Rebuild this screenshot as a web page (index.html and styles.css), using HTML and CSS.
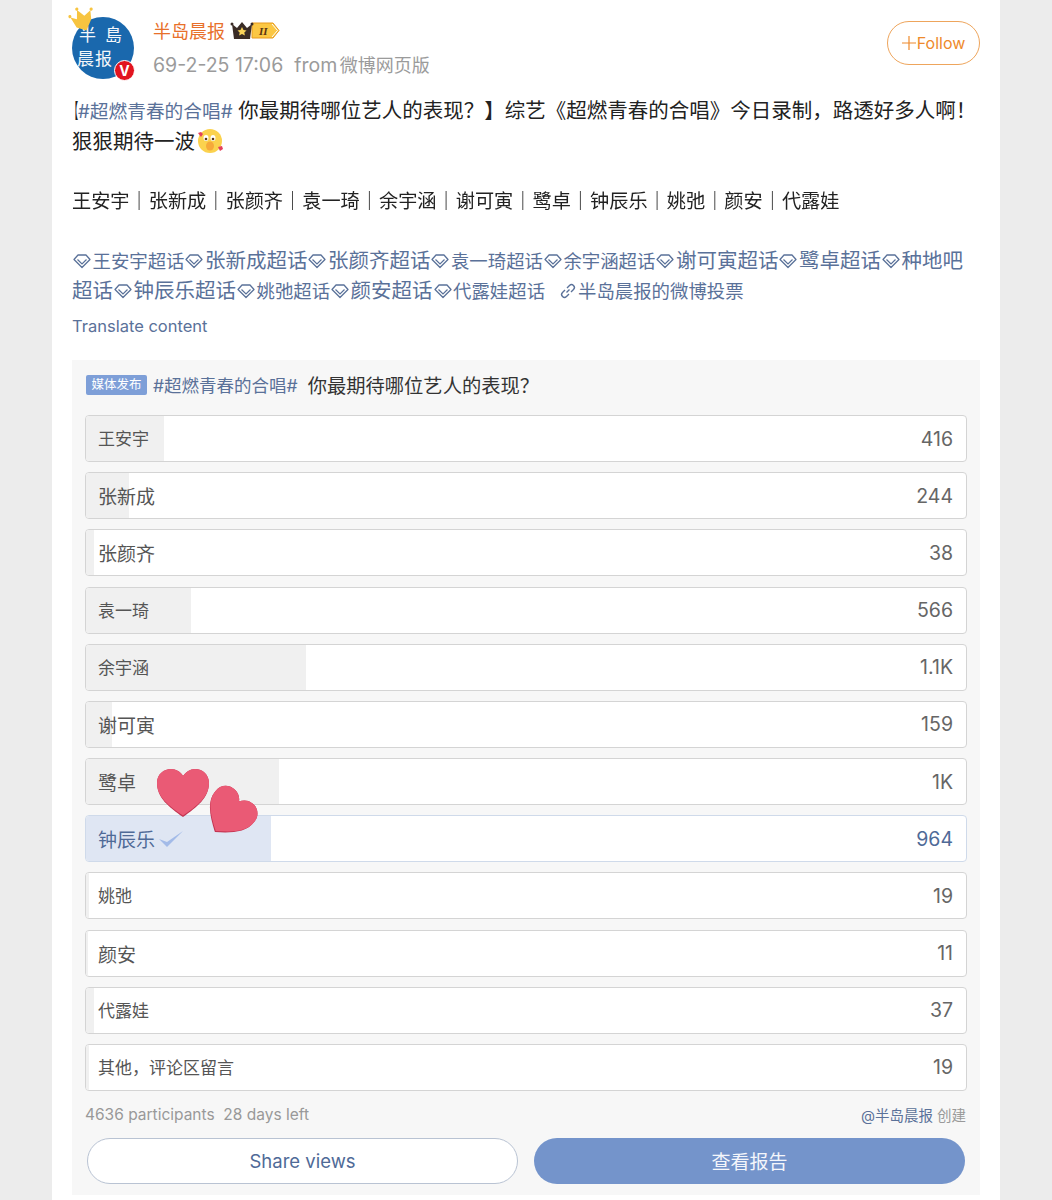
FILE: index.html
```html
<!DOCTYPE html>
<html lang="en">
<head>
    <meta charset="UTF-8">
    <meta name="viewport" content="width=device-width, initial-scale=1.0">
    <title>半岛晨报</title>
    <link rel="stylesheet" href="styles.css">
</head>
<body>
    <svg class="defs" width="0" height="0">
        <symbol id="gem" viewBox="0 0 18 16">
            <path d="M5 2h8l4 4.500L9 14.500 1 6.500z" fill="none" stroke="#5a7199" stroke-width="1.300" stroke-linejoin="round"/>
            <path d="M4.500 6.500L9 11l4.500-4.500" fill="none" stroke="#5a7199" stroke-width="1.200"/>
        </symbol>
        <symbol id="heart-shape" viewBox="0 0 52 48">
            <path d="M26 48C12 38 0 29 0 14 0 5 7 0 14 0c5 0 10 3 12 7 3-4 7-7 12-7 8 0 14 6 14 14 0 15-12 24-26 34z" fill="#c23350"/>
            <path d="M26 46.500C12 37 0 28 0 14 0 5 7 0 14 0c5 0 10 3 12 7 3-4 7-7 12-7 8 0 14 6 14 14 0 14-12 23-26 32.500z" fill="#ea5a75"/>
        </symbol>
    </svg>

    <main class="page">
        <header class="post-head">
            <div class="avatar">
                <div class="avatar-disc">
                    <div class="avatar-row top"><span>半</span><span>島</span></div>
                    <div class="avatar-row"><span>晨</span><span>报</span></div>
                </div>
                <svg class="avatar-crown" viewBox="0 0 28 26">
                    <path d="M6 20L2 9l6 3 2-9 6 7 7-4-1 9-7 10z" fill="#f7c440"/>
                    <circle cx="10" cy="2" r="1.600" fill="#f7c440"/>
                    <circle cx="24" cy="5" r="1.600" fill="#f7c440"/>
                    <circle cx="1.600" cy="8" r="1.600" fill="#f7c440"/>
                </svg>
                <span class="avatar-v">V</span>
            </div>
            <div class="author">
                <div class="author-name">
                    <span>半岛晨报</span>
                    <svg class="level" width="50" height="20" viewBox="0 0 50 20">
                        <path d="M22 3h21l6 7.500-6 7.500H22z" fill="#fbc743" stroke="#e89a1c"/>
                        <path d="M42 4l5.500 6.500L42 17" fill="none" stroke="#fff" stroke-width="1"/>
                        <path d="M2 4l5 4 5-6 5 6 5-4-2 15H4z" fill="#3a2c26"/>
                        <circle cx="2" cy="4" r="1.500" fill="#3a2c26"/>
                        <circle cx="22" cy="4" r="1.500" fill="#3a2c26"/>
                        <path d="M12 7l1.500 3 3 .4-2.200 2 .6 3-2.900-1.500-2.900 1.500.6-3-2.200-2 3-.4z" fill="#f9d35a"/>
                        <text x="29" y="15" class="level-text">II</text>
                    </svg>
                </div>
                <div class="author-meta">69-2-25 17:06&nbsp; from <span class="source">微博网页版</span></div>
            </div>
            <button class="follow">
                <svg class="follow-plus" width="14" height="14" viewBox="0 0 14 14"><path d="M7 0v14M0 7h14" stroke="#ee8a2c" stroke-width="1.200"/></svg>Follow
            </button>
        </header>

        <div class="post-body">
            <p><span class="bracket">【</span><a class="hash">#超燃青春的合唱#</a> 你最期待哪位艺人的表现？】综艺《超燃青春的合唱》今日录制，路透好多人啊！<br>狠狠期待一波<svg class="emoji" width="26" height="26" viewBox="0 0 26 26">
                <circle cx="13" cy="13" r="12" fill="#fbd24e"/>
                <ellipse cx="9" cy="10" rx="2.500" ry="3" fill="#fff"/>
                <ellipse cx="16" cy="10" rx="2.500" ry="3" fill="#fff"/>
                <circle cx="9" cy="11" r="1.300" fill="#5a3a1c"/>
                <circle cx="16" cy="11" r="1.300" fill="#5a3a1c"/>
                <ellipse cx="13" cy="18" rx="4" ry="4.500" fill="#f6a93a"/>
                <path d="M1 5l3-1 2 2-2 3zM21 19l4-1 1 3-3 2z" fill="#e4405c"/>
            </svg></p>
            <p class="names">王安宇｜张新成｜张颜齐｜袁一琦｜余宇涵｜谢可寅｜鹭卓｜钟辰乐｜姚弛｜颜安｜代露娃</p>
            <p class="topics">
                <a class="tight"><svg class="gem"><use href="#gem"/></svg>王安宇超话</a><a><svg class="gem"><use href="#gem"/></svg>张新成超话</a><a><svg class="gem"><use href="#gem"/></svg>张颜齐超话</a><a class="tight"><svg class="gem"><use href="#gem"/></svg>袁一琦超话</a><a class="tight"><svg class="gem"><use href="#gem"/></svg>余宇涵超话</a><a><svg class="gem"><use href="#gem"/></svg>谢可寅超话</a><a><svg class="gem"><use href="#gem"/></svg>鹭卓超话</a><a><svg class="gem"><use href="#gem"/></svg>种地吧<br>超话</a><a><svg class="gem"><use href="#gem"/></svg>钟辰乐超话</a><a class="tight"><svg class="gem"><use href="#gem"/></svg>姚弛超话</a><a><svg class="gem"><use href="#gem"/></svg>颜安超话</a><a class="tight"><svg class="gem"><use href="#gem"/></svg>代露娃超话</a><a class="vote-link tight"><svg class="link-icon" width="18" height="18" viewBox="0 0 18 18">
                    <path d="M7.500 10.500l3-3M6 8l-2.500 2.500a2.800 2.800 0 0 0 4 4L10 12M8 6l2.500-2.500a2.800 2.800 0 0 1 4 4L12 10" fill="none" stroke="#5a7199" stroke-width="1.400"/>
                </svg>半岛晨报的微博投票</a>
            </p>
            <div class="translate">Translate content</div>
        </div>

        <section class="poll">
            <div class="poll-title">
                <span class="poll-tag">媒体发布</span>
                <a>#超燃青春的合唱#</a>
                <span class="poll-question">你最期待哪位艺人的表现？</span>
            </div>

            <div class="options">
                <div class="option"><div class="fill" style="width: 78px"></div><span class="label small">王安宇</span><span class="count">416</span></div>
                <div class="option"><div class="fill" style="width: 43px"></div><span class="label">张新成</span><span class="count">244</span></div>
                <div class="option"><div class="fill" style="width: 8px"></div><span class="label">张颜齐</span><span class="count">38</span></div>
                <div class="option"><div class="fill" style="width: 105px"></div><span class="label small">袁一琦</span><span class="count">566</span></div>
                <div class="option"><div class="fill" style="width: 220px"></div><span class="label small">余宇涵</span><span class="count">1.1K</span></div>
                <div class="option"><div class="fill" style="width: 26px"></div><span class="label">谢可寅</span><span class="count">159</span></div>
                <div class="option"><div class="fill" style="width: 193px"></div><span class="label">鹭卓</span><span class="count">1K</span></div>
                <div class="option selected"><div class="fill" style="width: 185px"></div><span class="label">钟辰乐<svg class="check" width="26" height="20" viewBox="0 0 26 20"><path d="M1 10l8 8L25 2 9 13z" fill="#a3bbe8"/></svg></span><span class="count">964</span></div>
                <div class="option"><div class="fill" style="width: 3px"></div><span class="label small">姚弛</span><span class="count">19</span></div>
                <div class="option"><div class="fill" style="width: 2px"></div><span class="label">颜安</span><span class="count">11</span></div>
                <div class="option"><div class="fill" style="width: 8px"></div><span class="label small">代露娃</span><span class="count">37</span></div>
                <div class="option"><div class="fill" style="width: 3px"></div><span class="label small">其他，评论区留言</span><span class="count">19</span></div>
            </div>

            <div class="poll-foot">
                <span>4636 participants&nbsp; 28 days left</span>
                <span class="creator"><a>@半岛晨报</a> 创建</span>
            </div>

            <div class="poll-actions">
                <button class="btn btn-share">Share views</button>
                <button class="btn btn-report">查看报告</button>
            </div>
        </section>

        <!-- stickers on top of the screenshot -->
        <svg class="heart heart-one" viewBox="0 0 52 48">
            <use href="#heart-shape"/>
        </svg>
        <svg class="heart heart-two" viewBox="0 0 52 48">
            <use href="#heart-shape"/>
        </svg>
    </main>
</body>
</html>
```

FILE: styles.css
```css
/* General styles */
html, body {
    height: 100%;
    overflow: hidden;
}

body {
    margin: 0;
    background-color: #ececec;
    font-family: Inter, "Noto Sans CJK SC", sans-serif;
    color: #222;
}

a {
    color: #5a7199;
}

.defs {
    position: absolute;
}

.page {
    position: relative;
    width: 948px;
    height: 1200px;
    margin-left: 52px;
    background: white;
    box-sizing: border-box;
    padding: 0 20px;
}

/* Header */
.post-head {
    display: flex;
    align-items: flex-start;
    height: 94px;
}

.avatar {
    position: relative;
    width: 64px;
    height: 80px;
    flex-shrink: 0;
}

.avatar-disc {
    position: absolute;
    left: 0;
    top: 17px;
    width: 62px;
    height: 62px;
    border-radius: 50%;
    background: #1a68ad;
    box-sizing: border-box;
    padding: 6px 0 0 5px;
    color: #f4f7fa;
    font-size: 17px;
    line-height: 24px;
}

.avatar-row {
    display: flex;
    gap: 1px;
}

.avatar-row.top {
    gap: 9px;
    padding-left: 2px;
}

.avatar-crown {
    position: absolute;
    left: -3px;
    top: 6px;
    width: 28px;
    height: 26px;
    transform: rotate(-12deg);
}

.avatar-v {
    position: absolute;
    left: 42px;
    top: 60px;
    width: 21px;
    height: 21px;
    border-radius: 50%;
    border: 1px solid white;
    box-sizing: border-box;
    background: #e2141f;
    color: white;
    font-size: 14px;
    font-weight: 700;
    line-height: 19px;
    text-align: center;
}

.author {
    margin-left: 17px;
    flex: 1;
}

.author-name {
    display: flex;
    align-items: center;
    gap: 5px;
    margin-top: 17px;
    height: 26px;
    font-size: 18px;
    color: #e8702a;
}

.level-text {
    font-family: "Liberation Serif", serif;
    font-size: 11px;
    font-weight: 700;
    font-style: italic;
    fill: #5a3410;
}

.author-meta {
    margin-top: 8px;
    font-size: 19.500px;
    line-height: 28px;
    color: #9b9b9b;
}

.source {
    font-size: 18px;
    margin-left: -3px;
}

.follow {
    display: flex;
    align-items: center;
    justify-content: center;
    gap: 1px;
    width: 93px;
    height: 44px;
    margin-top: 21px;
    border: 1px solid #eea55c;
    border-radius: 22px;
    background: white;
    color: #ee8a2c;
    font-family: inherit;
    font-size: 16px;
    padding: 0;
}

/* Post text */
.post-body {
    font-size: 20.500px;
    line-height: 30px;
    height: 264px;
    margin-top: 2px;
}

.post-body p {
    margin: 0 0 30px;
    white-space: nowrap;
}

.bracket {
    display: inline-block;
    width: 8px;
    margin-left: -2px;
    transform: scaleX(0.4);
    transform-origin: left;
}

.hash {
    font-size: 18.700px;
}

.emoji {
    vertical-align: 1px;
    margin: -6px 0 -6px 2px;
}

.post-body .names {
    font-size: 19.200px;
    margin-top: -1px;
    margin-bottom: 30px;
    will-change: transform;
}

.post-body .topics {
    color: #5a7199;
    margin-bottom: 8px;
}

.tight {
    font-size: 18.400px;
}

.gem {
    width: 18px;
    height: 16px;
    margin: 0 1.500px 0 1px;
    vertical-align: -1px;
}

.vote-link {
    margin-left: 14px;
}

.link-icon {
    vertical-align: -2px;
    margin-right: 1px;
}

.translate {
    font-size: 16.500px;
    line-height: 24px;
    color: #5a7199;
}

/* Poll card */
.poll {
    width: 908px;
    height: 835px;
    box-sizing: border-box;
    padding: 0 13px;
    background: #f7f7f7;
}

.poll-title {
    display: flex;
    align-items: center;
    height: 55px;
    padding-bottom: 6px;
    box-sizing: border-box;
    font-size: 17.500px;
}

.poll-tag {
    background: #7e9fd8;
    color: white;
    font-size: 12.500px;
    line-height: 20px;
    width: 61px;
    margin: 0 6px 0 1px;
    text-align: center;
    border-radius: 2px;
}

.poll-question {
    margin-left: 10px;
    font-size: 19.300px;
    color: #333;
}

.options {
    display: flex;
    flex-direction: column;
    gap: 10.180px;
}

.option {
    position: relative;
    display: flex;
    justify-content: space-between;
    align-items: center;
    height: 47px;
    box-sizing: border-box;
    padding: 0 13px 0 12px;
    background: white;
    border: 1px solid #d4d4d4;
    border-radius: 4px;
    overflow: hidden;
}

.fill {
    position: absolute;
    left: 0;
    top: 0;
    bottom: 0;
    background: #f0f0f0;
}

.label {
    position: relative;
    display: flex;
    align-items: center;
    font-size: 19px;
    color: #555;
}

.label.small {
    font-size: 17px;
    padding-bottom: 2px;
}

.count {
    position: relative;
    font-size: 19.500px;
    color: #666;
}

.check {
    margin-left: 3px;
}

.option.selected {
    border-color: #cfdaea;
}

.selected .fill {
    background: #dfe6f3;
}

.selected .label,
.selected .count {
    color: #4f6a97;
}

.poll-foot {
    display: flex;
    justify-content: space-between;
    align-items: center;
    height: 47px;
    padding-right: 1px;
    font-size: 15.500px;
    color: #999;
}

.creator {
    font-size: 14.500px;
}

.poll-actions {
    display: flex;
    justify-content: space-between;
    padding: 0 2px;
}

.btn {
    width: 431px;
    height: 46px;
    border-radius: 23px;
    font-family: inherit;
    font-size: 18.500px;
    padding: 0;
}

.btn-share {
    background: white;
    border: 1px solid #b9c3d3;
    color: #4f6a97;
}

.btn-report {
    background: #7494cb;
    border: none;
    font-size: 19px;
    color: #f4f6fb;
}

/* Heart stickers */
.heart {
    position: absolute;
    overflow: visible;
}

.heart-one {
    left: 105px;
    top: 769px;
    width: 52px;
    height: 48px;
}

.heart-two {
    left: 152px;
    top: 791px;
    width: 50px;
    height: 46px;
    transform: rotate(38deg);
}
```
